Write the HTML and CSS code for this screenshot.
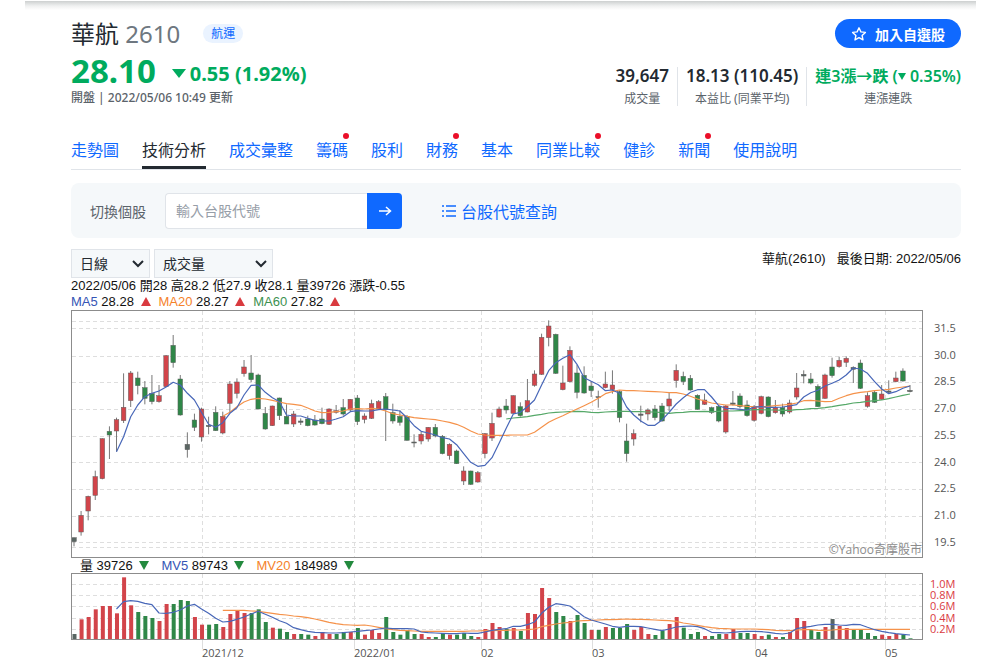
FILE: index.html
```html
<!DOCTYPE html>
<html lang="zh-Hant">
<head>
<meta charset="utf-8">
<meta name="viewport" content="width=device-width, initial-scale=1">
<title>華航 2610 技術分析</title>
<link rel="stylesheet" href="styles.css">
</head>
<body>
<div class="page">
  <header class="quote">
    <div class="title-row">
      <h1 class="name">華航 <span class="code">2610</span></h1>
      <a class="sector" href="#sector">航運</a>
      <button class="follow" type="button">
        <svg class="star" viewBox="0 0 16 16" aria-hidden="true"><path d="M8 1.8l1.9 4.1 4.5.5-3.3 3.1.9 4.4L8 11.700l-4 2.200.9-4.400L1.600 6.400l4.500-.5z"/></svg>
        加入自選股
      </button>
    </div>
    <div class="summary">
      <div class="price-block">
        <div class="price-row">
          <span class="price">28.10</span>
          <span class="change"><i class="tri tri-big"></i>0.55 (1.92%)</span>
        </div>
        <p class="updated">開盤 | 2022/05/06 10:49 更新</p>
      </div>
      <dl class="stats">
        <div class="stat"><dd>39,647</dd><dt>成交量</dt></div>
        <div class="stat"><dd>18.13 (110.45)</dd><dt>本益比 (同業平均)</dt></div>
        <div class="stat stat-down"><dd>連3漲→跌 (<i class="tri tri-small"></i> 0.35%)</dd><dt>連漲連跌</dt></div>
      </dl>
    </div>
  </header>

  <nav class="tabs">
    <a href="#trend">走勢圖</a>
    <a href="#ta" class="active" aria-current="page">技術分析</a>
    <a href="#volume">成交彙整</a>
    <a href="#chips" class="dot">籌碼</a>
    <a href="#dividend">股利</a>
    <a href="#finance" class="dot">財務</a>
    <a href="#basic">基本</a>
    <a href="#peers" class="dot">同業比較</a>
    <a href="#health">健診</a>
    <a href="#news" class="dot">新聞</a>
    <a href="#help">使用說明</a>
  </nav>

  <form class="switcher">
    <label for="symbol">切換個股</label>
    <div class="field">
      <input id="symbol" type="text" placeholder="輸入台股代號">
      <button type="button" aria-label="查詢">
        <svg viewBox="0 0 16 16" aria-hidden="true"><path d="M2 8h11M9 4l4.500 4L9 12"/></svg>
      </button>
    </div>
    <a class="lookup" href="#lookup">
      <svg viewBox="0 0 16 16" aria-hidden="true"><path d="M1 3h2M5 3h10M1 8h2M5 8h10M1 13h2M5 13h10"/></svg>
      台股代號查詢
    </a>
  </form>

  <section class="chart">
    <div class="controls">
      <select class="period" aria-label="週期"><option>日線</option><option>週線</option><option>月線</option></select>
      <select class="indicator" aria-label="指標"><option>成交量</option><option>KD</option></select>
      <p class="last-date"><span>華航(2610)</span><span>最後日期: 2022/05/06</span></p>
    </div>
    <p class="legend">2022/05/06 開28 高28.2 低27.9 收28.1 量39726 漲跌-0.55</p>
    <p class="legend">
      <span><b class="blue">MA5</b> 28.28 <i class="mark up"></i></span>
      <span><b class="orange">MA20</b> 28.27 <i class="mark up"></i></span>
      <span><b class="green">MA60</b> 27.82 <i class="mark up"></i></span>
    </p>
    <svg id="price" class="plot" viewBox="0 0 890 249" role="img" aria-label="日線圖"></svg>
    <p class="legend legend-volume">
      <span>量 39726 <i class="mark down"></i></span>
      <span><b class="blue">MV5</b> 89743 <i class="mark down"></i></span>
      <span><b class="orange">MV20</b> 184989 <i class="mark down"></i></span>
    </p>
    <svg id="volume" class="plot" viewBox="0 0 890 90" role="img" aria-label="成交量圖"></svg>
  </section>
</div>
<script src="chart.js"></script>
</body>
</html>
```

FILE: styles.css
```css
* { box-sizing: border-box; }

body {
  margin: 0;
  background: #fff;
  color: #232a31;
  font-family: "Noto Sans", "Noto Sans CJK TC", sans-serif;
}

.page {
  margin: 0 24px 0 25px;
  padding: 19px 15px 0 46px;
  background: linear-gradient(#cdd0d0, #f0f1f1 5px, #fff 9px) no-repeat 0 1px / 100% 9px;
}

h1, p, dl, dd { margin: 0; }
a { color: #0f69ff; text-decoration: none; }
button, input, select { font-family: inherit; }

.title-row { display: flex; align-items: center; height: 29px; }
.name { font-size: 24px; line-height: 29px; font-weight: 400; }
.code { color: #6e7780; }
.sector {
  margin-left: 23px;
  padding: 0 8px;
  border-radius: 10px;
  background: #eaf3ff;
  font-size: 12px;
  line-height: 19px;
}
.follow {
  display: flex;
  align-items: center;
  gap: 8px;
  height: 29px;
  margin-left: auto;
  padding: 0 16px;
  border: 0;
  border-radius: 15px;
  background: #0f69ff;
  color: #fff;
  font-size: 14px;
  font-weight: 700;
}
.star { width: 16px; height: 16px; fill: none; stroke: #fff; stroke-width: 1.4; stroke-linejoin: round; }

.summary { display: flex; justify-content: space-between; }
.price-block, .stat-down dd { color: #00ab5e; }
.price-row { display: flex; align-items: center; gap: 16px; height: 42px; padding-top: 3px; }
.price { font-size: 33px; line-height: 39px; font-weight: 700; }
.change { display: flex; align-items: center; gap: 4px; padding-top: 6px; font-size: 20px; line-height: 28px; font-weight: 700; }
.tri {
  display: inline-block;
  border: solid transparent;
  border-bottom-width: 0;
  border-top-color: #00ab5e;
}
.tri-big { border-width: 9px 7px 0; }
.tri-small { border-width: 7px 4px 0; vertical-align: 2px; }
.updated { color: #5b636a; font-size: 12px; line-height: 16px; font-weight: 500; }

.stats { display: flex; padding-top: 19px; }
.stat { display: flex; flex-direction: column; height: 39px; padding: 0 8px; text-align: center; }
.stat + .stat { border-left: 1px solid #e0e4e9; }
.stat:last-child { padding-right: 0; }
.stat dd { font-size: 17px; line-height: 18px; font-weight: 600; }
.stat-down dd { font-size: 16px; }
.stat dt { margin-top: 6px; color: #5b636a; font-size: 12px; line-height: 16px; }

.tabs {
  display: flex;
  gap: 23px;
  margin-top: 24px;
  border-bottom: 1px solid #e0e4e9;
  font-size: 16px;
  line-height: 32px;
  white-space: nowrap;
}
.tabs a { position: relative; height: 39px; padding-top: 4px; }
.tabs .active { border-bottom: 3px solid #232a31; color: #232a31; }
.dot::after {
  content: "";
  position: absolute;
  top: 3px;
  right: -1px;
  width: 6px;
  height: 6px;
  border-radius: 50%;
  background: #eb0f29;
}

.switcher {
  display: flex;
  align-items: center;
  height: 55px;
  margin-top: 13px;
  padding: 0 19px;
  border-radius: 8px;
  background: #f5f8fa;
}
.switcher label { color: #5b636a; font-size: 14px; }
.field { display: flex; margin: 0 39px 0 19px; }
.field input {
  width: 202px;
  height: 36px;
  padding: 0 10px;
  border: 1px solid #e0e4e9;
  border-right: 0;
  border-radius: 4px 0 0 4px;
  background: #fff;
  font-size: 14px;
}
.field input::placeholder { color: #979ea8; }
.field button {
  display: grid;
  place-items: center;
  width: 35px;
  height: 36px;
  padding: 0;
  border: 0;
  border-radius: 0 4px 4px 0;
  background: #0f69ff;
}
.field svg { width: 16px; height: 16px; fill: none; stroke: #fff; stroke-width: 1.5; }
.lookup { display: flex; align-items: center; gap: 4px; font-size: 16px; }
.lookup svg { width: 16px; height: 16px; stroke: currentColor; stroke-width: 1.4; }

.chart { font-family: "Liberation Sans", "Noto Sans CJK TC", sans-serif; color: #111; }
.controls { display: flex; gap: 4px; margin-top: 11px; height: 29px; }
.controls select {
  appearance: none;
  height: 29px;
  padding: 0 8px;
  border: 1px solid #e0e4e9;
  border-radius: 0;
  background: #f5f8fa url("data:image/svg+xml,%3Csvg xmlns='http://www.w3.org/2000/svg' viewBox='0 0 12 8'%3E%3Cpath d='M1 1l5 5 5-5' fill='none' stroke='%23232a31' stroke-width='2'/%3E%3C/svg%3E") no-repeat right 5px center / 12px 8px;
  color: #232a31;
  font-size: 14px;
}
.controls .period { width: 79px; }
.controls .indicator { width: 119px; }
.last-date { display: flex; gap: 11px; margin-left: auto; font-size: 13px; line-height: 20px; }
.legend { display: flex; gap: 8px; font-size: 13px; line-height: 16px; white-space: nowrap; }
.legend b { font-weight: 400; }
.legend-volume { gap: 12px; height: 14px; padding-left: 9px; line-height: 14px; }
.blue { color: #3555b5; }
.orange { color: #f5822a; }
.green { color: #3c9150; }
.mark { display: inline-block; margin-left: 3px; border: 5px solid transparent; }
.up { border-width: 0 5px 9px; border-bottom-color: #d93a3f; }
.down { border-width: 9px 5px 0; border-top-color: #238a3e; }

.plot { display: block; width: 100%; height: auto; font-family: "Open Sans", "Noto Sans CJK TC", sans-serif; font-size: 11px; }
.frame { fill: none; stroke: #8c8c8c; }
.grid { stroke: #dedede; stroke-dasharray: 4 3; }
.tick { stroke: #dedede; }
.axis { fill: #555; }
.axis-volume { fill: #d93a3f; }
.watermark { fill: #8c8c8c; font-size: 12px; text-anchor: end; }
.wick { stroke: #777; }
.bar-r { fill: #d2444a; }
.bar-g { fill: #2f8748; }
.bar-k { fill: #5a6663; }
.body { stroke: #5e5e5e; stroke-width: 0.5; }
.line { fill: none; stroke-width: 1.2; stroke-linejoin: round; }
.line-blue { stroke: #4867b8; }
.line-orange { stroke: #f5924a; }
.line-green { stroke: #55a868; }
```

FILE: chart.js
```js
// Drawing units are a third of a plot unit. Each candle: high, body top, body bottom, low, colour.
const candles = `698 698 710 724 k,618 631 681 692 r,572 574 618 646 r,497 515 571 585 r,400 401 521 523 r,364 379 390 462 g,338 344 378 440 r,205 307 347 354 r,198 204 287 306 r,200 219 242 268 g,
228 248 280 298 g,210 265 290 298 g,240 272 290 293 r,150 152 245 246 r,90 121 173 188 g,210 222 330 332 g,382 418 434 458 k,326 345 367 378 g,308 312 396 410 r,335 361 365 388 k,
304 322 377 378 g,320 334 384 388 r,228 237 295 322 r,220 231 265 280 r,165 186 206 215 r,150 204 224 232 g,206 210 312 313 g,306 325 372 374 g,302 303 362 363 r,278 279 332 345 g,
298 334 357 357 g,318 327 357 366 r,340 348 352 360 k,332 342 362 364 g,330 345 360 362 g,308 342 356 358 g,310 312 358 360 r,300 317 322 326 r,282 308 327 332 g,282 283 315 318 r,
270 279 350 360 g,325 333 343 355 r,284 296 340 342 r,285 290 312 315 r,264 275 314 408 g,296 323 348 356 g,316 334 352 362 g,330 334 406 407 g,388 411 414 427 k,380 388 408 418 r,
366 367 402 410 r,357 367 393 397 g,390 394 446 448 g,415 418 452 464 r,434 438 476 477 g,484 498 528 540 r,497 498 538 540 g,498 503 531 533 r,384 386 446 460 r,323 355 399 408 r,
305 312 336 338 r,282 303 315 326 g,271 272 325 326 r,292 305 332 335 g,222 287 321 322 r,196 207 241 245 r,86 97 208 210 r,46 63 98 124 r,86 88 205 207 g,182 234 254 256 r,
124 136 230 232 r,180 204 262 280 g,184 211 264 266 g,228 243 257 276 g,257 275 278 308 k,200 237 248 250 r,196 240 254 266 r,256 260 338 352 g,356 408 446 470 g,373 386 402 422 r,
302 327 331 352 k,310 315 327 346 r,300 312 338 346 g,294 303 348 350 g,263 282 303 318 r,178 196 227 248 r,200 214 230 240 g,210 220 255 257 g,268 271 313 314 g,266 285 298 300 r,
305 308 322 327 g,300 304 348 352 g,300 303 381 386 r,258 294 298 302 k,265 273 305 310 g,286 300 332 335 g,300 305 346 350 r,272 275 325 328 r,274 276 335 337 g,285 308 323 326 r,
296 308 327 335 g,284 294 321 326 r,204 249 276 284 r,196 208 213 235 k,204 222 234 238 g,238 244 305 306 g,206 210 280 282 r,158 186 212 218 g,155 166 185 188 r,154 160 172 186 r,
184 187 193 234 k,164 174 250 252 g,262 272 304 308 r,256 262 292 294 g,240 267 283 284 r,226 258 262 266 k,200 219 230 232 r,190 198 228 230 g,240 256 260 262 k`.split(",").map(row => row.trim().split(" "));

const volumes = `252k 208r 201r 178r 168r 168r 190r 82r 166r 186g 198g 204g 213r 162r 162g 150g 153g 201r 224r 224g 222g 231r 192r 183r 189r 189g 178g 216g 233r 236g 246g 252r 252g 254g 258r 246r 252r 252g 246g 246r 234g
254r 240r 249r 201g 246g 254g 240g 252g 252r 261r 261g 249g 254r 254g 249g 258g 261r 237r 219r 231r 237g 234r 243g 189r 192r 114r 144r 186g 198g 213r 195g 219g 240r 240g 231r 234g 234g 222g 240r 231r 252r 255g
242g 222r 201r 233g 252g 246g 258r 258g 252g 252r 237r 249g 249g 252r 258r 254g 261r 261g 246r 204r 213r 240g 246g 231r 207k 228r 234r 237g 237g 249g 258g 254r 258r 252r 254g 265g`.split(/\s+/);

const ma5 = [440,395,335,300,275,265,258,246,232,240,265,285,322,358,367,353,325,308,270,241,240,262,278,290,
  330,333,333,340,346,348,348,342,335,320,317,318,318,314,312,315,318,338,362,379,384,390,398,402,419,446,472,484,481,458,
  415,370,327,322,305,285,240,197,173,160,149,178,218,229,239,257,255,265,306,330,348,361,361,345,322,297,278,262,254,254,
  276,302,310,311,313,315,306,305,307,307,306,303,299,276,263,256,243,235,225,210,189,192,205,230,252,266,260,250,243];
const ma20 = [334,322,305,291,283,280,282,286,291,
  296,298,301,309,318,323,322,320,318,312,311,312,310,312,318,326,330,334,338,340,342,344,348,352,358,367,378,387,390,391,
  391,391,390,390,390,382,367,352,341,332,322,312,302,292,280,266,260,255,257,257,258,259,260,261,263,263,267,274,282,288,
  294,297,300,300,302,304,305,306,304,302,300,298,294,287,286,288,290,289,280,272,266,262,260,257,255,253,249,246,243];
const ma60 = [342,339,337,335,331,328,324,322,321,320,319,320,322,323,321,320,319,319,320,320,321,321,323,325,323,322,320,320,319,
  320,319,318,318,317,316,314,314,315,315,316,316,314,313,311,310,308,305,301,298,294,292,289,287,285,281,276,271,267];
const mv5 = [177,155,152,154,160,164,189,190,187,180,168,163,177,190,205,216,214,208,201,192,184,193,202,212,220,233,239,244,247,248,249,249,248,246,244,
  242,240,237,234,236,236,236,237,246,248,249,250,251,251,249,250,250,246,241,238,236,229,229,224,216,190,172,161,164,168,184,200,210,216,222,229,232,229,229,230,234,238,
  242,237,231,229,228,230,236,247,248,249,247,245,244,244,245,247,250,252,249,236,232,229,225,223,223,225,226,223,224,232,239,244,248,251,253,255];
const mv20 = [181,181,181,181,183,184,187,190,193,195,198,200,203,207,212,217,221,224,225,226,
  225,228,232,236,239,241,242,243,244,244,244,244,244,244,244,243,243,242,242,241,241,240,240,239,237,230,226,222,219,217,213,212,211,210,209,209,208,207,208,208,209,210,
  211,212,214,219,222,226,230,233,235,236,237,237,237,237,238,239,241,242,242,240,239,239,241,241,240,238,238,238,238,238,238,238,238,238,238,238];

const months = [[131, "2021/12"], [283, "2022/01"], [410, "02"], [521, "03"], [684, "04"], [814, "05"]];
const count = candles.length;
const xAt = i => 3 + i * 836 / (count - 1);
const priceY = v => v / 3 - 5;
const volumeY = v => v / 3 - 23;

// Averages run up to the latest session, so the series is aligned to the right.
const line = (values, y, colour) => {
  const start = count - values.length;
  const points = values.map((v, i) => xAt(start + i).toFixed(1) + "," + y(v).toFixed(1)).join(" ");
  return `<polyline class="line line-${colour}" points="${points}"/>`;
};
const hGrid = y => `<line class="grid" x1="1" x2="851" y1="${y}" y2="${y}"/>`;
const vGrid = (x, bottom) => `<line class="grid" x1="${x}.5" x2="${x}.5" y1="1" y2="${bottom}"/>`;

let price = [11, 18, 46, 72, 99, 126, 152, 179, 206, 232, 237].map(y => hGrid(y + 0.5)).join("");
price += months.map(m => vGrid(m[0], 248)).join("");
price += `<text class="watermark" x="851" y="244">©Yahoo奇摩股市</text>`;
candles.forEach(([high, top, bottom, low, colour], i) => {
  const x = xAt(i);
  price += `<line class="wick" x1="${x}" x2="${x}" y1="${priceY(high)}" y2="${priceY(low)}"/>`;
  price += `<rect class="body bar-${colour}" x="${x - 2.3}" width="4.6" y="${priceY(top)}" height="${(bottom - top) / 3}"/>`;
});
price += line(ma60, priceY, "green") + line(ma20, priceY, "orange") + line(ma5, priceY, "blue");
price += `<rect class="frame" x="0.5" y="0.5" width="851" height="247"/>`;
["31.5", "30.0", "28.5", "27.0", "25.5", "24.0", "22.5", "21.0", "19.5"].forEach((label, i) => {
  price += `<text class="axis" x="863" y="${Math.round(22 + i * 26.7)}">${label}</text>`;
});
document.getElementById("price").innerHTML = price;

let volume = [11, 22, 33, 45, 56].map(y => hGrid(y + 0.5)).join("");
months.forEach(([x, label]) => {
  volume += vGrid(x, 66) + `<line class="tick" x1="${x}.5" x2="${x}.5" y1="67" y2="76"/>`;
  volume += `<text class="axis" x="${x}" y="84">${label}</text>`;
});
volumes.forEach((v, i) => {
  const y = volumeY(parseInt(v, 10));
  volume += `<rect class="bar-${v.slice(-1)}" x="${xAt(i) - 1.5}" width="4" y="${y}" height="${66.5 - y}"/>`;
});
volume += line(mv20, volumeY, "orange") + line(mv5, volumeY, "blue");
volume += `<rect class="frame" x="0.5" y="0.5" width="851" height="66"/>`;
["1.0M", "0.8M", "0.6M", "0.4M", "0.2M"].forEach((label, i) => {
  volume += `<text class="axis-volume" x="859" y="${15 + i * 11 + (i > 2 ? 1 : 0)}">${label}</text>`;
});
document.getElementById("volume").innerHTML = volume;
```
